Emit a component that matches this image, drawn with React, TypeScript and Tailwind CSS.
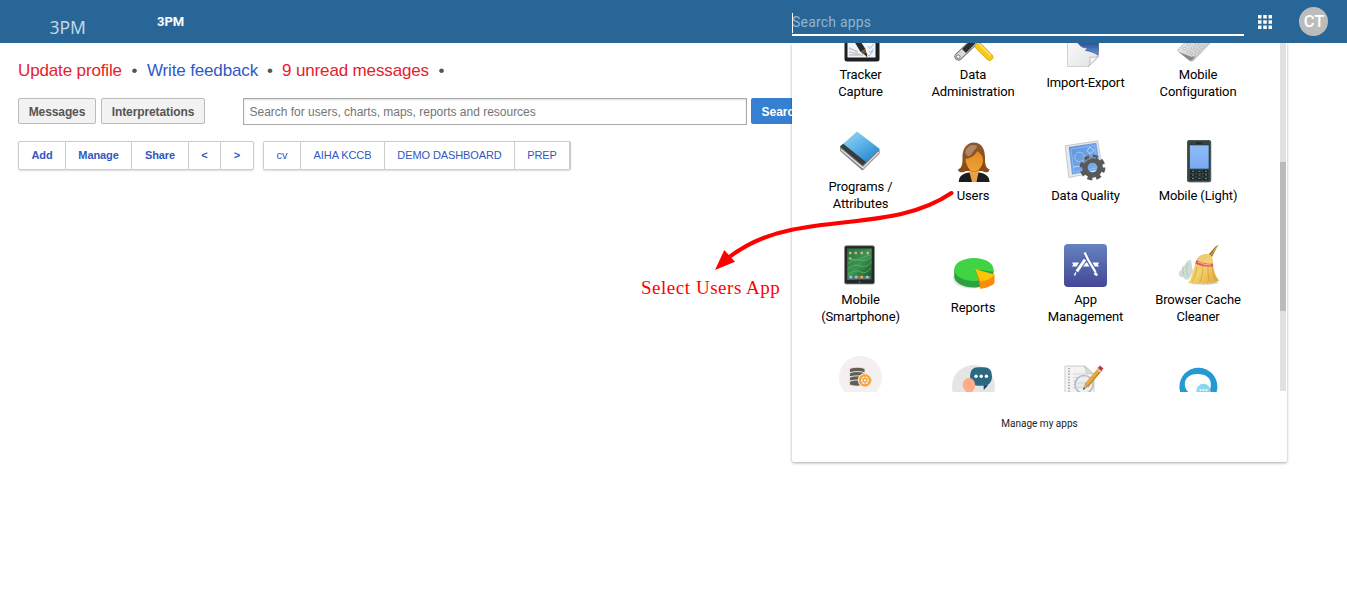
import type { ReactNode } from 'react'

function Icon({ children }: { children: ReactNode }) {
  return (
    <svg viewBox="0 0 43 43" className="mb-1 size-[43px] shrink-0">
      {children}
    </svg>
  )
}

const TrackerIcon = () => (
  <Icon>
    <rect x="5.5" y="0" width="35" height="42.4" rx="2.5" fill="#1d1f22" />
    <rect x="8.5" y="4" width="28" height="34.5" fill="#f4f5f7" />
    <path d="M10 36h14M10 33l10 2M10 29l9 4" stroke="#c3c6ca" strokeWidth="1.6" />
    <path d="M29 27l2 2.5 4-5M28 35l2 2 4-5M30 32l1.500 1.500 3-4" stroke="#7fb0ee" fill="none" strokeWidth=".8" />
    <path d="M15 22l5-2 6.5 10-5 3z" fill="#2a2a2c" />
    <path d="M21.500 33l5-3 1.800 8z" fill="#6f5330" />
    <path d="M25.500 34.500l2.800 4-1-4.800z" fill="#111" />
  </Icon>
)

const DataAdminIcon = () => (
  <Icon>
    <path d="M6.500 37.500L24 21" stroke="#6d7073" strokeWidth="8" strokeLinecap="round" />
    <path d="M6.500 37.500L24 21" stroke="#d5d7d9" strokeWidth="6.200" strokeLinecap="round" />
    <path d="M12 32L23 21" stroke="#2c2e30" strokeWidth="5.500" />
    <circle cx="6.300" cy="37.800" r="1.800" fill="#fff" stroke="#777" />
    <path d="M20 20l9 8" stroke="#aaa" strokeWidth="2.500" />
    <path d="M26.500 27L37.500 38" stroke="#c99a18" strokeWidth="7.400" strokeLinecap="round" />
    <path d="M26.500 27L37.500 38" stroke="#f6ca16" strokeWidth="6.200" strokeLinecap="round" />
    <path d="M27.500 25.500L38.500 36.500" stroke="#ffe568" strokeWidth="1.600" />
  </Icon>
)

const ImportExportIcon = () => (
  <Icon>
    <defs>
      <linearGradient id="page" x2="1" y2="1">
        <stop offset="0" stopColor="#fff" />
        <stop offset="1" stopColor="#dfe0e1" />
      </linearGradient>
      <linearGradient id="blueArrow" x2="0" y2="1">
        <stop offset="0" stopColor="#2c4f96" />
        <stop offset="1" stopColor="#6597d6" />
      </linearGradient>
    </defs>
    <path d="M3.500 0h31v30l-10 9.500h-21z" fill="url(#page)" stroke="#d0d0d0" />
    <path d="M24.500 39.500c2-3 2-6 1.200-9.500 3.500 1 6.800 0 8.800-1.500z" fill="#f8f8f8" stroke="#b5b5b5" strokeWidth=".8" />
    <path d="M14 16c3 4.500 7 5.500 10 4.500l-2.500 3c4 .5 9 2 12.500 4.500.5-4 .5-8 .5-12.500z" fill="url(#blueArrow)" stroke="#31599f" strokeWidth=".7" />
  </Icon>
)

const MobileConfigIcon = () => (
  <Icon>
    <defs>
      <linearGradient id="keypad" x2="1" y2="1">
        <stop offset="0" stopColor="#fafafa" />
        <stop offset="1" stopColor="#b8b8b8" />
      </linearGradient>
    </defs>
    <path d="M1 30.500L24 8l12 13-19.500 20.500q-2 1.500-4 0L2 33q-1.500-1.200-1-2.500z" fill="url(#keypad)" stroke="#b5b5b5" strokeWidth=".8" />
    <path d="M2 33l10.500 8.500q2 .3 3.700-1.200l2-3.500-3.500 1.200z" fill="#888" />
    <g fill="#efefef" stroke="#aaa" strokeWidth=".7">
      <ellipse cx="7.500" cy="29.500" rx="1.700" ry="1.200" />
      <ellipse cx="12" cy="33" rx="1.700" ry="1.200" />
      <ellipse cx="16.500" cy="36" rx="1.700" ry="1.200" />
      <ellipse cx="11.500" cy="25.500" rx="1.700" ry="1.200" />
      <ellipse cx="16" cy="29" rx="1.700" ry="1.200" />
      <ellipse cx="20.500" cy="32" rx="1.700" ry="1.200" />
      <ellipse cx="20" cy="25" rx="1.700" ry="1.200" />
      <ellipse cx="24.500" cy="28" rx="1.700" ry="1.200" />
    </g>
  </Icon>
)

const BookIcon = () => (
  <Icon>
    <defs>
      <linearGradient id="cover" x2=".8" y2="1">
        <stop offset="0" stopColor="#a5dcf8" />
        <stop offset=".5" stopColor="#5cb2e6" />
        <stop offset="1" stopColor="#1c82cc" />
      </linearGradient>
    </defs>
    <path d="M1.200 15.500v4.500L23.500 39.500 40.500 22.500v-4z" fill="#777" />
    <path d="M2 18.500L24 36.800 39.800 21" stroke="#dedede" strokeWidth="1.600" fill="none" />
    <path d="M1 15.500L18 .6 40.800 18 23.500 34.500z" fill="url(#cover)" />
    <path d="M1 15.500l3.200-2.700L27 31l-3.500 3.500z" fill="#393c3f" />
  </Icon>
)

const UsersIcon = () => (
  <Icon>
    <defs>
      <linearGradient id="hair" x2="0" y2="1">
        <stop offset="0" stopColor="#8c5a30" />
        <stop offset="1" stopColor="#8a4a12" />
      </linearGradient>
      <linearGradient id="face" x2="0" y2="1">
        <stop offset="0" stopColor="#e08b20" />
        <stop offset="1" stopColor="#f0a03a" />
      </linearGradient>
    </defs>
    <path d="M22 2.500C14 2.500 10 10 10.500 18c0 6-.5 10-4.500 11.500.5 3.500 5 3.500 8 1.500h16c3 2 7 2 7.500-1.500-4-1.500-4.500-6-4.500-12C33 9 29.500 2.500 22 2.500z" fill="url(#hair)" />
    <path d="M6.800 42c0-5 3-8.500 10-9.500h10.500c7 1 10.200 4.500 10.200 9.500z" fill="#1c1c1e" />
    <path d="M18 27h8.500v5.500L24.500 42h-4.500L17.500 32.500z" fill="#eaa048" />
    <path d="M17.500 27h9.500v3q-4.700 4-9.500 0z" fill="#b8650f" />
    <path d="M13.500 19c5-1 9-3 12-8 2 2 5.500 4 5.500 9 0 6-4.500 11.500-8.800 11.500S13.500 25 13.500 19z" fill="url(#face)" />
    <path d="M13 13c1-5 4-8 8-8 3 0 4 1 4 2.500-3 2-5 8-9 9z" fill="#c3a184" opacity=".65" />
  </Icon>
)

const DataQualityIcon = () => (
  <Icon>
    <defs>
      <linearGradient id="blueprint" x2="1" y2="1">
        <stop offset="0" stopColor="#5c93d8" />
        <stop offset="1" stopColor="#7fb3f0" />
      </linearGradient>
    </defs>
    <path d="M1.200 5.800L33.800.8 38.500 31 4.800 37.500z" fill="#e6e7e9" stroke="#bdbfc1" strokeWidth=".8" />
    <path d="M4.800 7l27.500-4.300L36.500 29.500 8 34.500z" fill="url(#blueprint)" />
    <path d="M7 9l23.500-3.700 3.500 22.500L9.800 32z" fill="none" stroke="#9bc3f4" strokeWidth=".7" />
    <circle cx="15.500" cy="17" r="4.800" fill="none" stroke="#bad7fb" strokeDasharray="2 1" />
    <path d="M26 7l4 3.500-4 3.500-3-3.500zM9 27l10-1" fill="none" stroke="#bad7fb" />
    <circle cx="28.500" cy="27.500" r="7.600" fill="none" stroke="#58595b" strokeWidth="5.500" />
    <circle cx="28.500" cy="27.500" r="11.200" fill="none" stroke="#58595b" strokeWidth="3.500" strokeDasharray="5 3.797" />
    <path d="M20 23q5-6.500 12-5" stroke="#8a8c8e" strokeWidth="1.500" fill="none" />
  </Icon>
)

const phoneKeyRows = [31.300, 35, 38.600]

const MobileLightIcon = () => (
  <Icon>
    <defs>
      <linearGradient id="phoneScreen" x2="0" y2="1">
        <stop offset="0" stopColor="#8fbcf4" />
        <stop offset="1" stopColor="#78aaf0" />
      </linearGradient>
    </defs>
    <rect x="10" y="0" width="24.200" height="42.300" rx="2.500" fill="#35423f" />
    <rect x="10.700" y=".6" width="22.800" height="41" rx="2" fill="none" stroke="#586561" strokeWidth=".8" />
    <rect x="19" y="2.600" width="6" height="1" fill="#141a19" />
    <rect x="12.500" y="5" width="19.500" height="24" fill="url(#phoneScreen)" stroke="#1f3559" strokeWidth=".6" />
    {phoneKeyRows.map((y) => (
      <g key={y} fill="#1a2322">
        <rect x="13" y={y - 1} width="5.500" height="2.600" rx="1" />
        <rect x="19.500" y={y - 1} width="5.500" height="2.600" rx="1" />
        <rect x="26" y={y - 1} width="5.500" height="2.600" rx="1" />
        <path d={`M15 ${y}h2M21.500 ${y}h2M28 ${y}h2`} stroke="#7591b0" />
      </g>
    ))}
  </Icon>
)

const TabletIcon = () => (
  <Icon>
    <defs>
      <linearGradient id="grass" x2="1" y2="1">
        <stop offset="0" stopColor="#2c7040" />
        <stop offset=".5" stopColor="#3c9450" />
        <stop offset="1" stopColor="#174f2c" />
      </linearGradient>
    </defs>
    <rect x="5.500" y="1.700" width="30" height="38.300" rx="1.800" fill="#252829" stroke="#8e9091" strokeWidth=".8" />
    <rect x="8.200" y="4.500" width="24.600" height="31.300" fill="url(#grass)" />
    <path d="M8.500 20q7-6 12-4t12-3M8.500 25q8-6 13-3t11-4M9 30q9-5 13-2t10-4M9 14q8 4 12 1t11-4" stroke="#63b56c" fill="none" opacity=".75" />
    <path d="M10 9h2.500M15.500 9H18M21.500 9H24M27.500 9H30" stroke="#c6b692" strokeWidth="2.300" />
    <path d="M10 14.500h2.500" stroke="#abc2a4" strokeWidth="2" />
    <path d="M9.500 33.500h22" stroke="#5f7c6b" strokeWidth="3" />
    <path d="M10.500 33h2.500M16 33h2.500M27 33h2.500" stroke="#8bc7f7" strokeWidth="2.500" />
    <path d="M21.500 33H24" stroke="#ffa640" strokeWidth="2.500" />
    <circle cx="20.500" cy="38" r=".8" fill="#777" />
  </Icon>
)

const ReportsIcon = () => (
  <Icon>
    <ellipse cx="19" cy="27" rx="18" ry="9.500" fill="#bbb" opacity=".4" />
    <path d="M2.200 17.500v7c0 6 8.500 11 19.500 11 3 0 5-.3 6.500-.8V22h13.300v-4.500z" fill="#2ba23f" />
    <path d="M22 6C11 6 2.200 11 2.200 17.500S11 29 22 29c2.500 0 4.500-.3 6-.7l-5.200-11 18.500 2.500c.2-.8.300-1.500.3-2.300C41.600 11 33 6 22 6z" fill="#40d344" />
    <path d="M28 29.500v7.200c7-.9 12.500-3 14.500-5.800V22z" fill="#f98a0c" />
    <path d="M23.300 17.300L28 29.500c7.500-1 12.500-3.700 14.500-7z" fill="#ffc505" />
    <path d="M23.300 17.300L28 29.500v5z" fill="#df850c" />
  </Icon>
)

const AppManagementIcon = () => (
  <Icon>
    <defs>
      <linearGradient id="appTile" x2="0" y2="1">
        <stop offset="0" stopColor="#6583bf" />
        <stop offset="1" stopColor="#444796" />
      </linearGradient>
    </defs>
    <rect width="43" height="43" rx="4" fill="url(#appTile)" />
    <path d="M8 18.500h7l-2.300 4H8l1.200-2zM18 18.500h6.500l2 4H16zM28.500 18.500H35l-1.200 2 1.200 2h-4.500z" fill="#fff" />
    <path d="M21.500 14.500L12.500 28" stroke="#5264a9" strokeWidth="5" />
    <path d="M21 15.500L12.800 27.500" stroke="#fff" strokeWidth="3" />
    <path d="M11.800 28.500l-1.300 3" stroke="#fff" strokeWidth="1.500" />
    <path d="M21 10L32 30" stroke="#5264a9" strokeWidth="4.500" />
    <path d="M20.700 8.500L24 15.500M24 15.500L31.500 28" stroke="#fff" strokeWidth="2.300" />
    <path d="M31.500 28q2.500 1 2 4-3.500 0-3.500-3z" fill="#fff" />
  </Icon>
)

const BroomIcon = () => (
  <Icon>
    <defs>
      <linearGradient id="straw" x2="1" y2="1">
        <stop offset="0" stopColor="#e8c274" />
        <stop offset=".5" stopColor="#f3d26c" />
        <stop offset="1" stopColor="#dda332" />
      </linearGradient>
    </defs>
    <ellipse cx="27" cy="38.500" rx="14" ry="2.200" fill="#999" opacity=".5" />
    <path d="M14 16q-5 0-6 5-4 1-3 5-4 1-3 5 1 3 4 2 2 4 6 2l4-7z" fill="#cfddd4" />
    <path d="M11 19q-3 5 0 14M6 24q-1 4 1 7" stroke="#b0c7ba" fill="none" />
    <path d="M41.500 1l-3 1.500-7 8 3.500 2.500 4.500-9z" fill="#9a722f" />
    <path d="M40 2.500L34 11" stroke="#d2b26c" />
    <path d="M20.500 14c3-3.500 6.500-4.500 10.500-4 4 1 5 4 5 8.500.5 8 2.500 14 6 18-2 2-3 0-4 2-1-1-2-1-3.500 1-1-1-2.500-1.500-4 .5-2-2-3 0-4.500 0-1-2-3-1-4.500 0-1-2-3-1-5 .5-.5-2-3-1-5.500-1.500C15.500 34 16 24 20.500 14z" fill="url(#straw)" />
    <path d="M20 23q-1 9-5 15M26 23q0 8-3 15M31 23q0 9 1 14M35 22q1 9 3 14" stroke="#d39a35" strokeWidth=".7" fill="none" />
    <path d="M19.500 16q7 4.500 16.500 3.500v3q-10 1-17.800-3z" fill="#e25b5c" />
    <path d="M21 18q7 3.500 13 3" stroke="#f6b5b2" fill="none" />
  </Icon>
)

const diskTops = [13.500, 17.800, 22.100, 26.300]

const DatabaseIcon = () => (
  <Icon>
    <circle cx="21.500" cy="21.500" r="21.500" fill="#f3f0ef" />
    {diskTops.map((y) => (
      <path key={y} d={`M10.500 ${y}c0-3 15.500-3 15.500 0v2c0 2.500-15.500 2.500-15.500 0z`} fill="#655e56" stroke="#f3f0ef" strokeWidth=".9" />
    ))}
    <circle cx="26" cy="24.300" r="7.200" fill="#f3f0ef" />
    <circle cx="26" cy="24.300" r="4.900" fill="none" stroke="#f7a138" strokeWidth="2" />
    <circle cx="26" cy="24.300" r="5.900" fill="none" stroke="#f7a138" strokeWidth="1" strokeDasharray="2.100 1" />
    <path d="M26 20v8.600M22.300 22.200l7.400 4.200M22.300 26.400l7.400-4.200" stroke="#f7a138" />
    <circle cx="26" cy="24.300" r="1.800" fill="#fff" stroke="#f7a138" strokeWidth="1.300" />
  </Icon>
)

const ChatIcon = () => (
  <Icon>
    <circle cx="21.500" cy="21.500" r="21.500" fill="#e5e5e5" />
    <path d="M26 2.300h6q8 0 8 9 0 6-4 8.500l-4.200 5v-4H26q-8 0-8-9.500 0-9 8-9z" fill="#2b6881" />
    <path d="M34 20.500h2l-4.200 4.300V21z" fill="#174e65" />
    <ellipse cx="17" cy="20" rx="6.200" ry="7" fill="#ffab85" />
    <path d="M13 23l2 7h5l1-7z" fill="#ffab85" />
    <circle cx="24" cy="11.200" r="1.700" fill="#fff" />
    <circle cx="29.200" cy="11.200" r="1.700" fill="#fff" />
    <circle cx="34.400" cy="11.200" r="1.700" fill="#fff" />
  </Icon>
)

const NotesIcon = () => (
  <Icon>
    <path d="M1 1h20l9 8v34H1z" fill="#f3f3f3" stroke="#cfcfcf" />
    <path d="M20 1q3 4 2 8 4-1 7 0z" fill="#ddd" stroke="#b5b5b5" strokeWidth=".6" />
    <path d="M5 3v30" stroke="#999" strokeWidth="1.500" strokeDasharray="1.300 1.500" />
    <path d="M9 9h12M9 12.500h13M9 16h14M9 19.500h14M9 23h14" stroke="#ccd4de" />
    <circle cx="20" cy="19.500" r="9" fill="#ebeef1" fillOpacity=".8" stroke="#b8babb" strokeWidth="1.700" />
    <path d="M13 18h12M13 22h12" stroke="#c6d0d8" />
    <path d="M36.500 4L22.500 20.500" stroke="#b9872c" strokeWidth="4.600" />
    <path d="M36 3.500L22.500 19.500" stroke="#e9a93b" strokeWidth="3" />
    <path d="M21 18.500l3.500 3-5.500 3.500z" fill="#c7a675" />
    <path d="M19 25l.8-2.500 1.300 1z" fill="#222" />
    <path d="M35.500 4.500L37.700 2" stroke="#d2303e" strokeWidth="4.600" />
    <path d="M34.300 5.900l1.200-1.400" stroke="#ccc" strokeWidth="4.600" />
  </Icon>
)

const TalkRingIcon = () => (
  <Icon>
    <circle cx="21.400" cy="21.700" r="19" fill="#259ad2" />
    <path d="M20.500 9C12 9 7.800 13.500 7.800 19c0 4 2 7.500 6 10h17c2.500-3 3-7 3-10 0-6-5-10-13.300-10z" fill="#fff" />
    <circle cx="26.500" cy="26" r="7.200" fill="#8bd6ee" />
    <path d="M22.500 25h8.500" stroke="#fff" strokeWidth="1.500" strokeDasharray="2 1" />
  </Icon>
)

const apps: { lines: string[]; icon: () => ReactNode }[] = [
  { lines: ['Tracker', 'Capture'], icon: TrackerIcon },
  { lines: ['Data', 'Administration'], icon: DataAdminIcon },
  { lines: ['Import-Export'], icon: ImportExportIcon },
  { lines: ['Mobile', 'Configuration'], icon: MobileConfigIcon },
  { lines: ['Programs /', 'Attributes'], icon: BookIcon },
  { lines: ['Users'], icon: UsersIcon },
  { lines: ['Data Quality'], icon: DataQualityIcon },
  { lines: ['Mobile (Light)'], icon: MobileLightIcon },
  { lines: ['Mobile', '(Smartphone)'], icon: TabletIcon },
  { lines: ['Reports'], icon: ReportsIcon },
  { lines: ['App', 'Management'], icon: AppManagementIcon },
  { lines: ['Browser Cache', 'Cleaner'], icon: BroomIcon },
  { lines: ['', ''], icon: DatabaseIcon },
  { lines: [''], icon: ChatIcon },
  { lines: [''], icon: NotesIcon },
  { lines: [''], icon: TalkRingIcon },
]

function Header() {
  return (
    <header className="flex h-[43px] bg-[#276696] text-white">
      <div className="w-[107px] pt-[15px] pl-[49.5px] font-['Noto_Sans',sans-serif] text-[17.5px] leading-6 text-[#c3d6e4]">3PM</div>
      <div className="flex-1 pt-[14px] pl-[50px] font-[Roboto,sans-serif] text-[13px] leading-4 font-bold">3PM</div>
      <div className="mt-3 flex h-6 w-[452px] items-start border-b-2 border-white font-[Roboto,sans-serif] text-[14px] leading-5 tracking-[0.2px] text-[#93b5cf]">
        <span className="mt-px -mr-px h-5 w-px bg-white" />
        Search apps
      </div>
      <svg viewBox="0 0 14 14" className="mt-[14.5px] ml-[13.5px] size-[14px] fill-white">
        <path d="M0 0h3.500v3.500H0zM5.250 0h3.500v3.500h-3.500zM10.500 0H14v3.500h-3.500zM0 5.250h3.500v3.500H0zM5.250 5.250h3.500v3.500h-3.500zM10.500 5.250H14v3.500h-3.500zM0 10.500h3.500V14H0zM5.250 10.500h3.500V14h-3.500zM10.500 10.500H14V14h-3.500z" />
      </svg>
      <div className="mt-[7px] mr-[19px] ml-[27.5px] flex size-[29px] items-center justify-center rounded-full bg-[#bcbcbc] pt-[2px] pl-px font-[Roboto,sans-serif] text-[16.5px] font-medium">CT</div>
    </header>
  )
}

function AppsMenu() {
  return (
    <section className="absolute top-[43px] left-[792px] h-[419px] w-[495px] rounded-b-[2px] bg-white font-[Roboto,sans-serif] text-black shadow-[0_1px_3px_rgba(0,0,0,0.35)] [clip-path:inset(0_-6px_-6px_-6px)]">
      <div className="flex h-[349px] justify-between overflow-hidden pr-px">
        <div className="-mt-[40px] ml-[12.25px] grid h-[450px] w-[450px] grid-cols-4 grid-rows-4">
          {apps.map(({ lines, icon: AppIcon }, i) => (
            <div key={i} className="flex flex-col items-center justify-center text-[13px] leading-[17px] tracking-[-0.12px]">
              <AppIcon />
              {lines.map((line, n) => (
                <div key={n} className="h-[17px] whitespace-nowrap">
                  {line}
                </div>
              ))}
            </div>
          ))}
        </div>
        <div className="h-[348px] w-[6px] bg-[#e1e1e1] pt-[119px]">
          <div className="h-[149px] bg-[#bababa]" />
        </div>
      </div>
      <div className="pt-[24px] text-center text-[10px] leading-4 text-[#222]">Manage my apps</div>
    </section>
  )
}

const tab = 'flex items-center justify-center border-r border-[#ccc] last:border-r-0'

export default function App() {
  return (
    <div className="relative h-[594px] w-[1347px] overflow-hidden bg-white font-['Liberation_Sans',Arial,sans-serif]">
      <Header />
      <main className="pl-[18px]">
        <div className="flex pt-[18px] text-[17px] leading-5 tracking-[-0.14px] text-[#e8202c]">
          <span>Update profile</span>
          <span className="w-[25px] text-center text-[#555]">•</span>
          <span className="text-[#3158c8]">Write feedback</span>
          <span className="w-[24px] text-center text-[#555]">•</span>
          <span>9 unread messages</span>
          <span className="w-[25px] text-center text-[#555]">•</span>
        </div>
        <div className="mt-[17px] flex h-[27px] items-start text-[12px]">
          <button className="h-[26px] w-[78px] rounded-[2px] border border-[#bbb] bg-[#f2f2f2] pt-0.5 font-bold tracking-[-0.1px] text-[#555]">Messages</button>
          <button className="ml-[5px] h-[26px] w-[104px] rounded-[2px] border border-[#bbb] bg-[#f2f2f2] pt-0.5 font-bold tracking-[-0.1px] text-[#555]">Interpretations</button>
          <div className="ml-[38px] flex h-[27px] w-[504px] items-center border border-[#aaa] pl-[5.500px] tracking-[-0.01px] text-[#757575] shadow-[inset_0_1px_2px_#ddd]">Search for users, charts, maps, reports and resources</div>
          <button className="ml-1 h-[26px] w-[61px] rounded-[2px] bg-[#3580d0] pt-0.5 font-bold text-white">Search</button>
        </div>
        <div className="mt-4 flex h-[29px] text-[11px] text-[#3158c0]">
          <div className="flex w-[236px] rounded-[2px] border border-[#ccc] font-bold tracking-[-0.1px] shadow-[0_1px_2px_#ddd]">
            <span className={`${tab} w-[47px]`}>Add</span>
            <span className={`${tab} w-[66px]`}>Manage</span>
            <span className={`${tab} w-[57px]`}>Share</span>
            <span className={`${tab} w-[32px]`}>&lt;</span>
            <span className={`${tab} w-[32px]`}>&gt;</span>
          </div>
          <div className="ml-[9px] flex w-[308px] rounded-[2px] border border-r-2 border-[#ccc] tracking-[-0.1px] shadow-[0_1px_2px_#ddd]">
            <span className={`${tab} w-[37px]`}>cv</span>
            <span className={`${tab} w-[84px]`}>AIHA KCCB</span>
            <span className={`${tab} w-[130px]`}>DEMO DASHBOARD</span>
            <span className={`${tab} w-[54px]`}>PREP</span>
          </div>
        </div>
      </main>
      <AppsMenu />
      <svg viewBox="0 0 250 90" className="pointer-events-none absolute top-[185px] left-[710px] h-[90px] w-[250px]">
        <path d="M241.500 8C196 39 138 33 82 44.700Q45 52 18 73" fill="none" stroke="#f00" strokeWidth="4" strokeLinecap="round" />
        <path d="M5 85l9.300-20L25 76.800z" fill="#f00" />
      </svg>
      <div className="absolute top-[276px] left-[641px] font-['Liberation_Serif',serif] text-[19px] leading-6 tracking-[0.53px] whitespace-nowrap text-[#f00]">Select Users App</div>
    </div>
  )
}
